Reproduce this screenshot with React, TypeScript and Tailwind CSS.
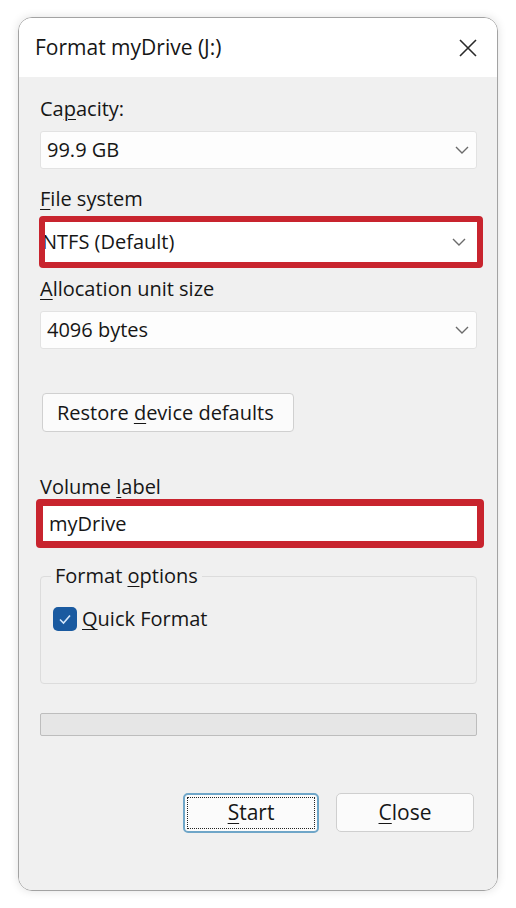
import React from 'react'

function Chevron() {
  return (
    <svg width="16" height="10" viewBox="0 0 16 10" className="shrink-0">
      <path d="M2 2 L8 8 L14 2" fill="none" stroke="#6b6b6b" strokeWidth="1.4" />
    </svg>
  )
}

function Label({ pre, u, post }: { pre?: string; u: string; post?: string }) {
  return (
    <div className="h-[24px] leading-[24px] text-[20px] text-[#161616]">
      {pre}
      <span className="underline underline-offset-[3px] decoration-1">{u}</span>
      {post}
    </div>
  )
}

function Select({ value }: { value: string }) {
  return (
    <div className="h-[38px] bg-[#fdfdfd] border border-[#e2e2e2] rounded-[3px] flex items-center justify-between pl-[6px] pr-[6px]">
      <span className="text-[20px] text-[#161616]">{value}</span>
      <Chevron />
    </div>
  )
}

export default function App() {
  return (
    <div className="w-[516px] h-[908px] bg-white pt-[17px] pl-[18px]" style={{ fontFamily: '"Open Sans", "Noto Sans", sans-serif' }}>
      <div className="w-[480px] h-[874px] rounded-[14px] border border-[#a3a3a3] shadow-[0_0_10px_rgba(0,0,0,0.12)] overflow-hidden flex flex-col">
        {/* Title bar */}
        <div className="h-[59px] bg-white flex items-center justify-between pl-[16px] pr-[19px] shrink-0">
          <span className="text-[21px] text-[#161616]">Format myDrive (J:)</span>
          <svg width="20" height="20" viewBox="0 0 20 20">
            <path d="M2 2 L18 18 M18 2 L2 18" stroke="#2a2a2a" strokeWidth="1.6" />
          </svg>
        </div>

        {/* Body */}
        <div className="flex-1 bg-[#f0f0f0] pl-[21px] pr-[20px] pt-[20px]">
          <Label pre="Ca" u="p" post="acity:" />
          <div className="mt-[10px]">
            <Select value="99.9 GB" />
          </div>

          <div className="mt-[18px]">
            <Label u="F" post="ile system" />
          </div>
          <div className="mt-[5px] -ml-[1px] -mr-[6px] h-[52px] border-[6px] border-[#c8242e] rounded-[4px] bg-white flex items-center justify-between overflow-hidden pr-[10px]">
            <span className="text-[20px] text-[#161616] -ml-[3px]">NTFS (Default)</span>
            <Chevron />
          </div>

          <div className="mt-[9px]">
            <Label u="A" post="llocation unit size" />
          </div>
          <div className="mt-[10px]">
            <Select value="4096 bytes" />
          </div>

          <button className="mt-[44px] h-[39px] w-[252px] ml-[2px] bg-[#fbfbfb] border border-[#d0d0d0] rounded-[4px] text-[20px] text-[#161616] text-left pl-[14px]">
            Restore <span className="underline underline-offset-[3px] decoration-1">d</span>evice defaults
          </button>

          <div className="mt-[43px]">
            <Label pre="Volume " u="l" post="abel" />
          </div>
          <div className="-ml-[4px] -mr-[7px] h-[49px] border-[7px] border-[#c8242e] rounded-[4px] bg-white flex items-center pl-[6px]">
            <span className="text-[20px] text-[#161616]">myDrive</span>
          </div>

          {/* Format options group */}
          <div className="relative mt-[28px] h-[108px] border border-[#dcdcdc] rounded-[4px]">
            <span className="absolute -top-[13px] left-[10px] px-[4px] bg-[#f0f0f0] text-[20px] leading-[24px] text-[#161616]">
              Format <span className="underline underline-offset-[3px] decoration-1">o</span>ptions
            </span>
            <div className="flex items-center gap-[5px] pl-[12px] pt-[27px]">
              <div className="w-[24px] h-[24px] rounded-[5px] bg-[#1a5aa0] flex items-center justify-center">
                <svg width="14" height="12" viewBox="0 0 14 12">
                  <path d="M2 6.5 L5.5 10 L12 2.5" fill="none" stroke="#d6e8fa" strokeWidth="1.6" />
                </svg>
              </div>
              <span className="text-[20px] text-[#161616]">
                <span className="underline underline-offset-[3px] decoration-1">Q</span>uick Format
              </span>
            </div>
          </div>

          {/* Progress */}
          <div className="mt-[29px] h-[23px] bg-[#e6e6e6] border border-[#bdbdbd] rounded-[2px]" />

          {/* Buttons */}
          <div className="mt-[57px] flex justify-end gap-[17px] pr-[3px]">
            <button className="w-[136px] h-[40px] rounded-[5px] border-2 border-[#6fa6c8] bg-[#fbfbfb] p-[2px]">
              <div className="w-full h-full border border-dotted border-[#222] flex items-center justify-center text-[21px] text-[#161616]">
                <span><span className="underline underline-offset-[3px] decoration-1">S</span>tart</span>
              </div>
            </button>
            <button className="w-[138px] h-[39px] rounded-[5px] border border-[#cfcfcf] bg-[#fbfbfb] text-[21px] text-[#161616]">
              <span className="underline underline-offset-[3px] decoration-1">C</span>lose
            </button>
          </div>
        </div>
      </div>
    </div>
  )
}
